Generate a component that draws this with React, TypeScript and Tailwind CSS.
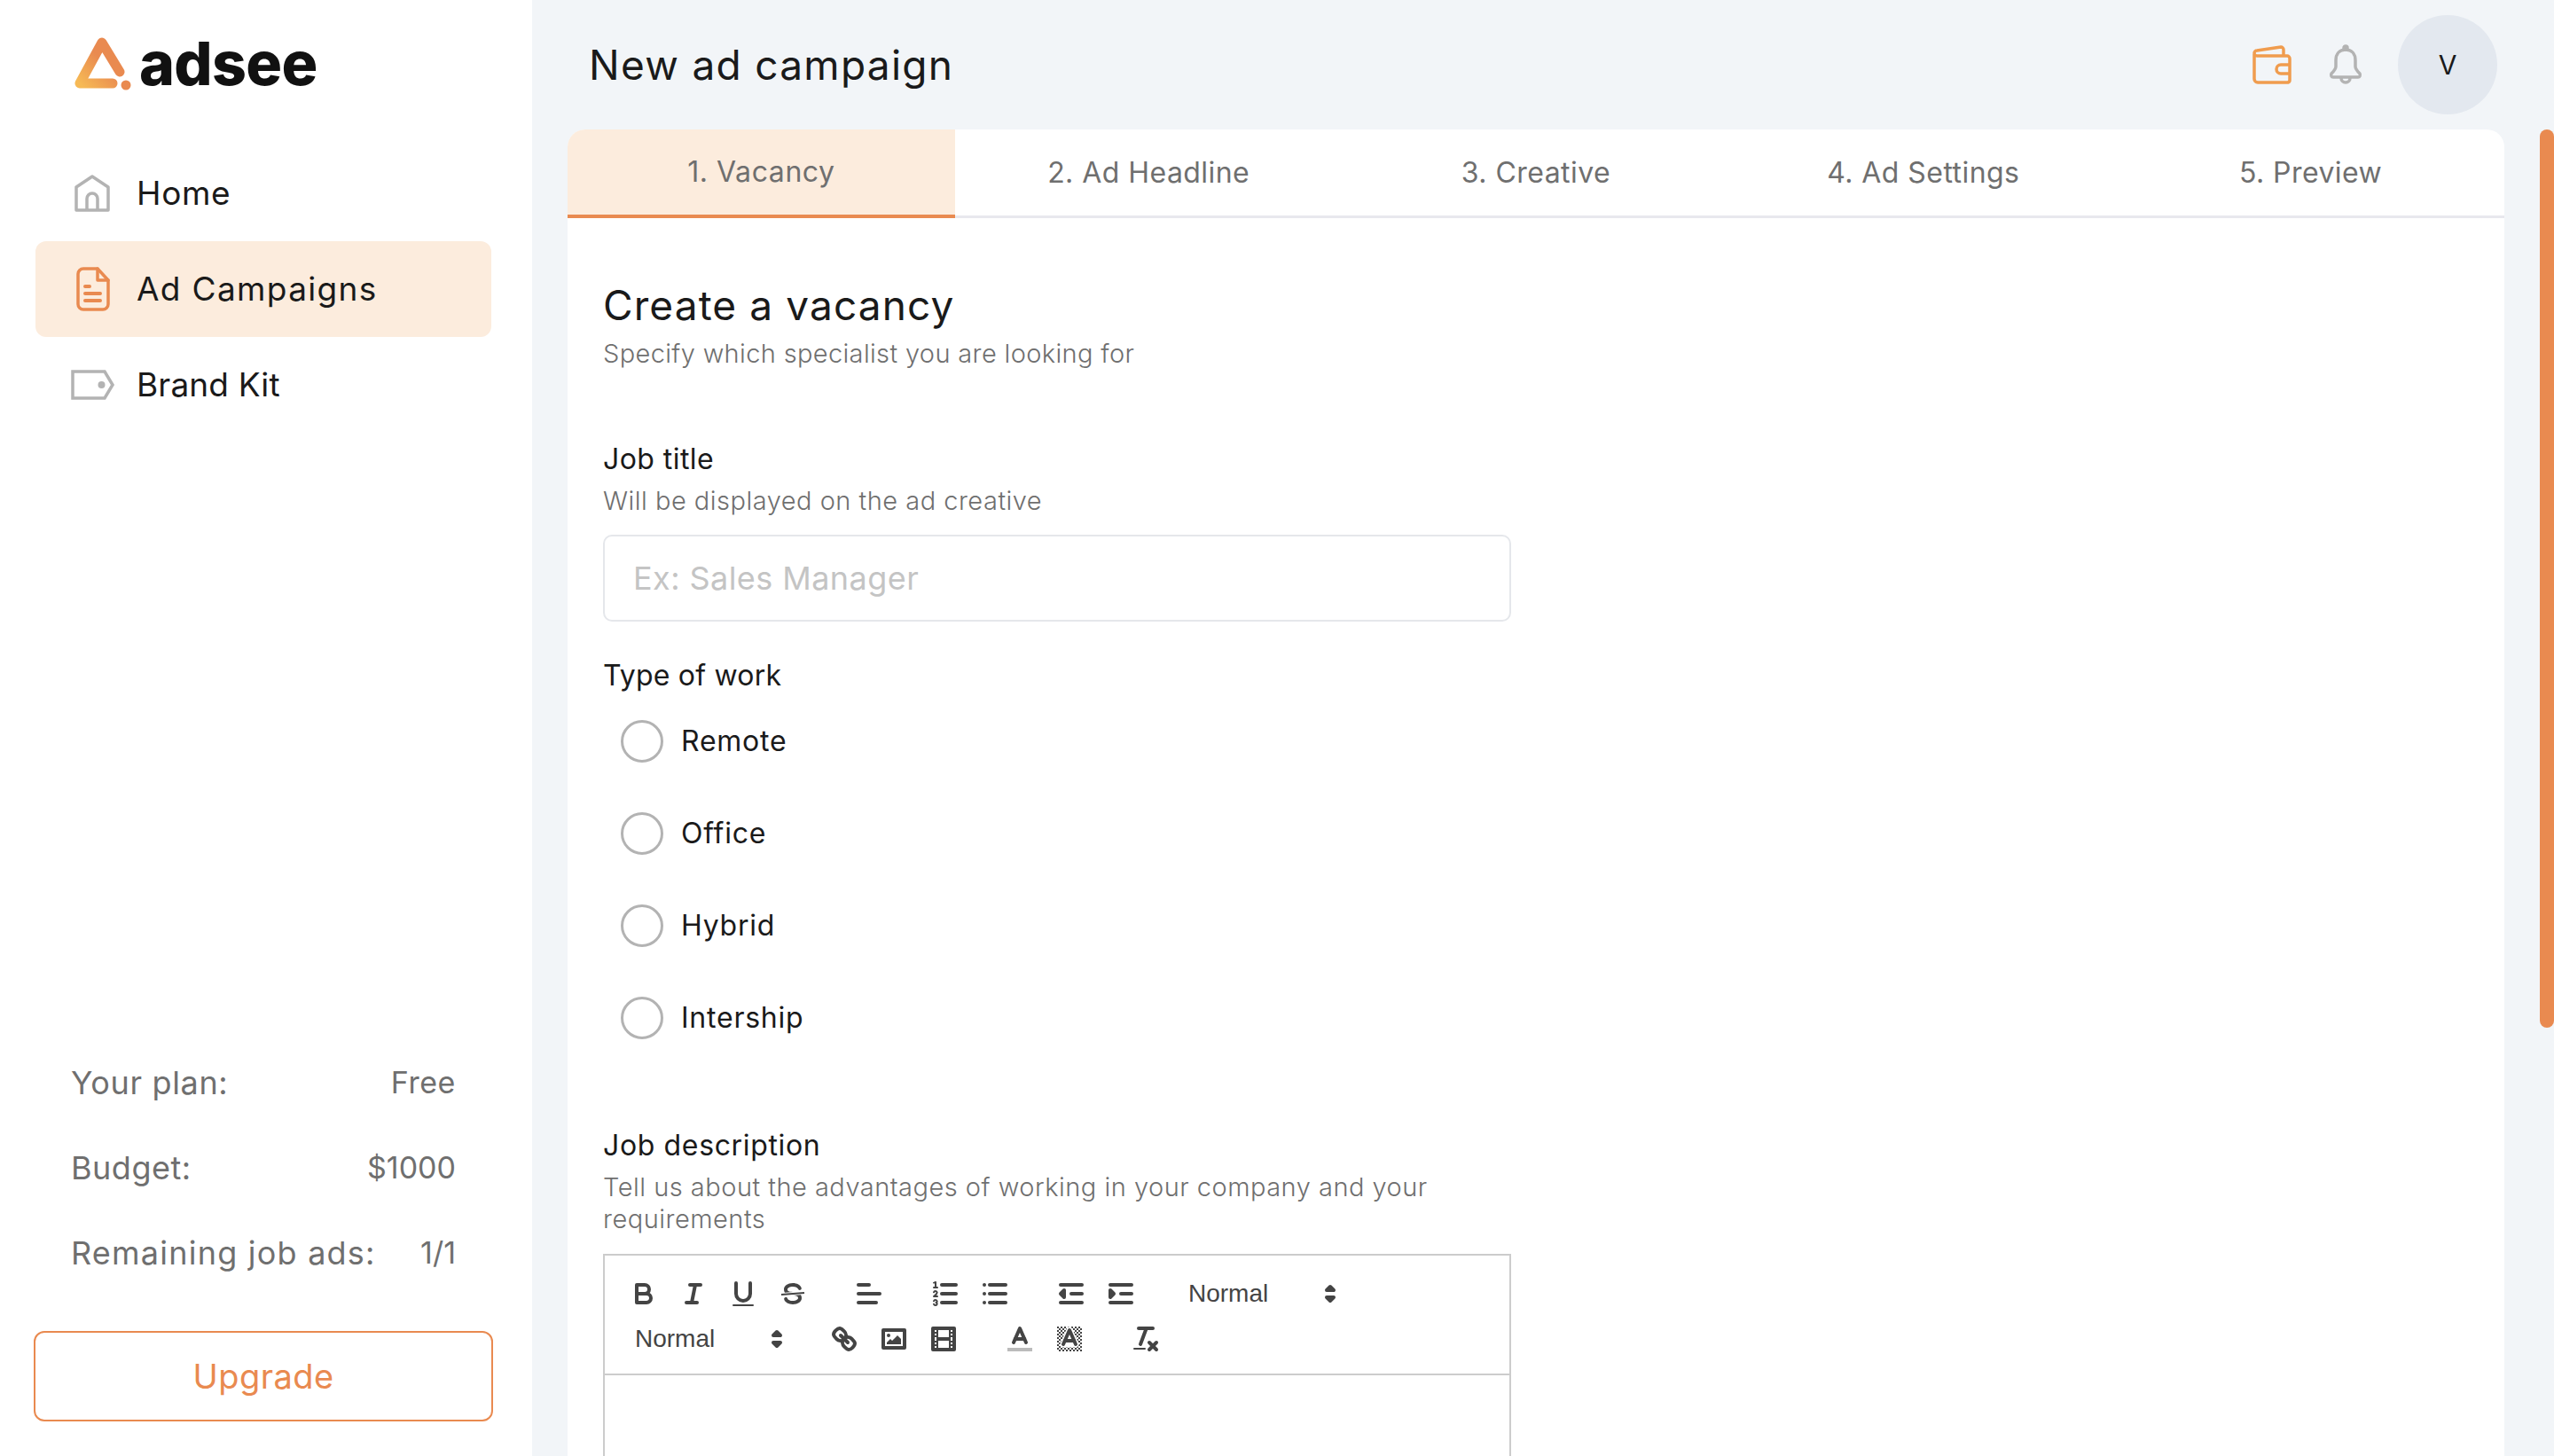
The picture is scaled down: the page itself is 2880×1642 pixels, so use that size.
import type { ReactNode } from "react";

const tabs = ["1. Vacancy", "2. Ad Headline", "3. Creative", "4. Ad Settings", "5. Preview"];
const workTypes = ["Remote", "Office", "Hybrid", "Intership"];

function HomeIcon() {
  return (
    <svg width="42" height="44" viewBox="0 0 42 44" fill="none" stroke="#b3b3b3" strokeWidth="3.5" strokeLinejoin="round">
      <path d="M2 15 20 3l18 12v26H2Z" />
      <path d="M14 41V28a6 6 0 0 1 12 0v13" />
    </svg>
  );
}

function DocIcon() {
  return (
    <svg width="38" height="50" viewBox="0 0 38 50" fill="none" stroke="#e98a50" strokeWidth="3.5" strokeLinecap="round" strokeLinejoin="round">
      <path d="M8 2h16l12 13v27a6 6 0 0 1-6 6H8a6 6 0 0 1-6-6V8a6 6 0 0 1 6-6Z" />
      <path d="M24 2v13h12" />
      <path d="M10 22h5M10 30h17M10 38h17" strokeWidth="4" />
    </svg>
  );
}

function TagIcon() {
  return (
    <svg width="50" height="34" viewBox="0 0 50 34" fill="none" stroke="#b3b3b3" strokeWidth="3.5">
      <path d="M2 2h36l9 15-9 15H2Z" />
      <circle cx="34.5" cy="17" r="4" fill="#b3b3b3" stroke="none" />
    </svg>
  );
}

function WalletIcon() {
  return (
    <svg width="46" height="46" viewBox="0 0 46 46" fill="none" stroke="#f09c4e" strokeWidth="3.5" strokeLinejoin="round">
      <path d="M3 11v28a4 4 0 0 0 4 4h34a3 3 0 0 0 2-3V16a3 3 0 0 0-3-3H6a3 3 0 0 1-3-3 3 3 0 0 1 3-3l27-4a3 3 0 0 1 3 3v7" />
      <path d="M43 23H33a5 5 0 0 0 0 10h10" />
    </svg>
  );
}

function BellIcon() {
  return (
    <svg width="38" height="46" viewBox="0 0 38 46" fill="none" stroke="#b3b3b3" strokeWidth="3.5" strokeLinejoin="round">
      <path d="M19 6c-7 0-11 5-11 12v7c0 3-2 5-5 8-1 2 0 4 2 4h28c2 0 3-2 2-4-3-3-5-5-5-8v-7c0-7-4-12-11-12Z" />
      <circle cx="19" cy="4" r="2" fill="#b3b3b3" />
      <path d="M14 38a5 5 0 0 0 10 0" />
    </svg>
  );
}

function LogoMark() {
  return (
    <svg width="68" height="60" viewBox="0 0 68 60" fill="none">
      <defs>
        <linearGradient id="logo" x1="0" y1="1" x2="0.8" y2="0.2">
          <stop offset="0" stopColor="#f6b955" />
          <stop offset="0.7" stopColor="#e98a50" />
        </linearGradient>
      </defs>
      <path d="M52 39 32 6 7 52h37" stroke="url(#logo)" strokeWidth="11" strokeLinecap="round" strokeLinejoin="round" />
      <circle cx="59" cy="54" r="5.5" fill="#e98a50" />
    </svg>
  );
}

// Quill's snow toolbar icons, on their 18x18 grid
function Ql({ children }: { children: ReactNode }) {
  return (
    <div className="w-[56px] h-[48px] flex items-center justify-center">
      <svg width="36" height="36" viewBox="0 0 18 18" fill="none" stroke="#444" strokeWidth="2" strokeLinecap="round" strokeLinejoin="round">
        {children}
      </svg>
    </div>
  );
}

function Picker() {
  return (
    <div className="w-[196px] h-[48px] flex items-center justify-between pl-[18px] text-[28px] text-[#444] font-['Liberation_Sans',sans-serif]">
      <span>Normal</span>
      <svg width="36" height="36" viewBox="0 0 18 18" fill="#444" stroke="#444" strokeWidth="2" strokeLinejoin="round">
        <polygon points="7 11 9 13 11 11 7 11" />
        <polygon points="7 7 9 5 11 7 7 7" />
      </svg>
    </div>
  );
}

function Toolbar() {
  return (
    <div className="border-b-2 border-[#ccc] pt-[19px] pb-[15px] pl-[16px] flex flex-col gap-[3px]">
      <div className="flex gap-[30px]">
        <div className="flex">
          <Ql>
            <path d="M5,4H9.5A2.5,2.5,0,0,1,12,6.5v0A2.5,2.5,0,0,1,9.5,9H5A0,0,0,0,1,5,9V4A0,0,0,0,1,5,4Z" />
            <path d="M5,9h5.5A2.5,2.5,0,0,1,13,11.5v0A2.5,2.5,0,0,1,10.5,14H5a0,0,0,0,1,0,0V9A0,0,0,0,1,5,9Z" />
          </Ql>
          <Ql>
            <line x1="7" x2="13" y1="4" y2="4" />
            <line x1="5" x2="11" y1="14" y2="14" />
            <line x1="8" x2="10" y1="14" y2="4" />
          </Ql>
          <Ql>
            <path d="M5,3V9a4.012,4.012,0,0,0,4,4H9a4.012,4.012,0,0,0,4-4V3" />
            <rect height="1" rx="0.5" ry="0.5" width="12" x="3" y="15" fill="#444" stroke="none" />
          </Ql>
          <Ql>
            <line x1="15.5" x2="2.5" y1="8.5" y2="9.5" strokeLinecap="butt" strokeWidth="1" />
            <path fill="#444" stroke="none" d="M9.007,8C6.542,7.791,6,7.519,6,6.5,6,5.792,7.283,5,9,5c1.571,0,2.765.679,2.969,1.309a1,1,0,0,0,1.9-.617C13.356,4.106,11.354,3,9,3,6.2,3,4,4.538,4,6.5a3.2,3.2,0,0,0,.5,1.843Z" />
            <path fill="#444" stroke="none" d="M8.984,10C11.457,10.208,12,10.479,12,11.5c0,.708-1.283,1.5-3,1.5-1.571,0-2.765-.679-2.969-1.309a1,1,0,1,0-1.9.617C4.644,13.894,6.646,15,9,15c2.8,0,5-1.538,5-3.5a3.2,3.2,0,0,0-.5-1.843Z" />
          </Ql>
        </div>
        <Ql>
          <line x1="3" x2="15" y1="9" y2="9" />
          <line x1="3" x2="13" y1="14" y2="14" />
          <line x1="3" x2="9" y1="4" y2="4" />
        </Ql>
        <div className="flex">
          <Ql>
            <line x1="7" x2="15" y1="4" y2="4" />
            <line x1="7" x2="15" y1="9" y2="9" />
            <line x1="7" x2="15" y1="14" y2="14" />
            <line strokeWidth="1" x1="2.5" x2="4.5" y1="5.5" y2="5.5" />
            <path fill="#444" stroke="none" d="M3.5,6A0.5,0.5,0,0,1,3,5.5V3.085l-0.276.138A0.5,0.5,0,0,1,2.053,3c-0.124-.247-0.023-0.324.224-0.447l1-.5A0.5,0.5,0,0,1,4,2.5v3A0.5,0.5,0,0,1,3.5,6Z" />
            <path strokeWidth="1" d="M4.5,10.5h-2c0-.234,1.85-1.076,1.85-2.234A0.959,0.959,0,0,0,2.5,8.156" />
            <path strokeWidth="1" d="M2.5,14.846a0.959,0.959,0,0,0,1.85-.109A0.7,0.7,0,0,0,3.75,14a0.688,0.688,0,0,0,.6-0.736,0.959,0.959,0,0,0-1.85-.109" />
          </Ql>
          <Ql>
            <line x1="6" x2="15" y1="4" y2="4" />
            <line x1="6" x2="15" y1="9" y2="9" />
            <line x1="6" x2="15" y1="14" y2="14" />
            <line x1="3" x2="3" y1="4" y2="4" />
            <line x1="3" x2="3" y1="9" y2="9" />
            <line x1="3" x2="3" y1="14" y2="14" />
          </Ql>
        </div>
        <div className="flex">
          <Ql>
            <line x1="3" x2="15" y1="14" y2="14" />
            <line x1="3" x2="15" y1="4" y2="4" />
            <line x1="9" x2="15" y1="9" y2="9" />
            <polyline fill="#444" points="5 7 5 11 3 9 5 7" />
          </Ql>
          <Ql>
            <line x1="3" x2="15" y1="14" y2="14" />
            <line x1="3" x2="15" y1="4" y2="4" />
            <line x1="9" x2="15" y1="9" y2="9" />
            <polyline fill="#444" points="3 7 3 11 5 9 3 7" />
          </Ql>
        </div>
        <Picker />
      </div>
      <div className="flex gap-[30px]">
        <Picker />
        <div className="flex">
          <Ql>
            <line x1="7" x2="11" y1="7" y2="11" />
            <path d="M8.9,4.577a3.476,3.476,0,0,1,.36,4.679A3.476,3.476,0,0,1,4.577,8.9C3.185,7.5,2.035,6.4,4.217,4.217S7.5,3.185,8.9,4.577Z" />
            <path d="M13.423,9.1a3.476,3.476,0,0,0-4.679-.36,3.476,3.476,0,0,0,.36,4.679c1.392,1.392,2.5,2.542,4.679.36S14.815,10.5,13.423,9.1Z" />
          </Ql>
          <Ql>
            <rect height="10" width="12" x="3" y="4" />
            <circle cx="6" cy="7" r="1" fill="#444" stroke="none" />
            <polyline fill="#444" stroke="none" points="5 12 5 11 7 9 8 10 11 7 13 9 13 12 5 12" />
          </Ql>
          <Ql>
            <rect height="12" width="12" x="3" y="3" />
            <rect fill="#444" stroke="none" height="12" width="1" x="5" y="3" />
            <rect fill="#444" stroke="none" height="12" width="1" x="12" y="3" />
            <rect fill="#444" stroke="none" height="2" width="8" x="5" y="8" />
            <rect fill="#444" stroke="none" height="1" width="3" x="3" y="5" />
            <rect fill="#444" stroke="none" height="1" width="3" x="3" y="7" />
            <rect fill="#444" stroke="none" height="1" width="3" x="3" y="10" />
            <rect fill="#444" stroke="none" height="1" width="3" x="3" y="12" />
            <rect fill="#444" stroke="none" height="1" width="3" x="12" y="5" />
            <rect fill="#444" stroke="none" height="1" width="3" x="12" y="7" />
            <rect fill="#444" stroke="none" height="1" width="3" x="12" y="10" />
            <rect fill="#444" stroke="none" height="1" width="3" x="12" y="12" />
          </Ql>
        </div>
        <div className="flex">
          <Ql>
            <line stroke="#bbb" strokeLinecap="square" x1="3" x2="15" y1="15" y2="15" />
            <polyline points="5.5 11 9 3 12.5 11" />
            <line x1="11.63" x2="6.38" y1="9" y2="9" />
          </Ql>
          <Ql>
            <defs>
              <pattern id="checker" width="2" height="2" patternUnits="userSpaceOnUse">
                <rect width="1" height="1" fill="#444" stroke="none" />
                <rect x="1" y="1" width="1" height="1" fill="#444" stroke="none" />
              </pattern>
            </defs>
            <rect x="2" y="2" width="14" height="14" fill="url(#checker)" stroke="none" />
            <polygon points="5.5 12 9 4 12.5 12" fill="#fff" stroke="#fff" strokeWidth="3.5" />
            <polyline points="5.5 12 9 4 12.5 12" />
            <line x1="11.63" x2="6.38" y1="10" y2="10" />
          </Ql>
        </div>
        <Ql>
          <line x1="5" x2="13" y1="3" y2="3" />
          <line x1="6" x2="9.35" y1="12" y2="3" />
          <line x1="11" x2="15" y1="11" y2="15" />
          <line x1="15" x2="11" y1="11" y2="15" />
          <rect fill="#444" stroke="none" height="1" rx="0.5" ry="0.5" width="7" x="2" y="14" />
        </Ql>
      </div>
    </div>
  );
}

function Sidebar() {
  return (
    <aside className="w-[600px] shrink-0 bg-white flex flex-col h-full">
      <div className="h-[146px] pl-[83px] flex items-center gap-[6px] pb-[2px]">
        <LogoMark />
        <span className="text-[68px] leading-none font-extrabold text-[#111] -mt-[2px] tracking-[-0.01em]">adsee</span>
      </div>
      <nav className="mt-[18px] px-[40px] flex flex-col text-[37px] text-[#1a1a1a]">
        <div className="h-[108px] flex items-center">
          <div className="w-[114px] pl-[44px]"><HomeIcon /></div>
          <span className="tracking-[0.018em]">Home</span>
        </div>
        <div className="h-[108px] flex items-center bg-[#fcecdd] rounded-[12px] w-[514px]">
          <div className="w-[114px] pl-[46px]"><DocIcon /></div>
          <span className="tracking-[0.036em]">Ad Campaigns</span>
        </div>
        <div className="h-[108px] flex items-center">
          <div className="w-[114px] pl-[40px]"><TagIcon /></div>
          <span className="tracking-[0.004em]">Brand Kit</span>
        </div>
      </nav>
      <div className="mt-auto pl-[80px] pr-[86px] flex flex-col gap-[48px] leading-[48px] text-[#6f6f6f]">
        <div className="flex justify-between items-center">
          <span className="text-[36px] tracking-[0.018em]">Your plan:</span>
          <span className="text-[34px] tracking-[0.016em]">Free</span>
        </div>
        <div className="flex justify-between items-center">
          <span className="text-[36px] tracking-[0.014em]">Budget:</span>
          <span className="text-[34px]">$1000</span>
        </div>
        <div className="flex justify-between items-center">
          <span className="text-[36px] tracking-[0.034em]">Remaining job ads:</span>
          <span className="text-[34px]">1/1</span>
        </div>
      </div>
      <button className="mt-[64px] mb-[39px] ml-[38px] w-[518px] h-[102px] rounded-[12px] border-2 border-[#e98a50] text-[38px] text-[#e98a50] bg-white tracking-[0.012em]">
        Upgrade
      </button>
    </aside>
  );
}

export default function App() {
  return (
    <div className="h-[1642px] w-[2880px] overflow-hidden flex bg-[#f2f5f8] font-[Inter,sans-serif]">
      <Sidebar />
      <main className="flex-1 min-w-0 flex flex-col">
        <header className="h-[146px] shrink-0 pl-[64px] pr-[48px] flex items-center">
          <h1 className="text-[46px] leading-none text-[#1a1a1a] tracking-[0.028em]">New ad campaign</h1>
          <div className="ml-auto flex items-center">
            <WalletIcon />
            <div className="ml-[41px]"><BellIcon /></div>
            <div className="ml-[40px] w-[112px] h-[112px] rounded-full bg-[#e3e8ef] flex items-center justify-center text-[30px] text-[#1a1a1a]">V</div>
          </div>
        </header>
        <section className="mx-[40px] flex-1 bg-white rounded-t-[20px] overflow-hidden">
          <div className="flex h-[100px] border-b-[3px] border-[#e8e8ee]">
            {tabs.map((tab, i) => (
              <div
                key={tab}
                className={
                  i === 0
                    ? "flex-1 -mb-[3px] bg-[#fcecdd] border-b-[4px] border-[#e98a50] flex items-center justify-center text-[32px] text-[#6f6f6f] tracking-[0.018em]"
                    : "flex-1 flex items-center justify-center text-[32px] text-[#6f6f6f] tracking-[0.014em]"
                }
              >
                {tab}
              </div>
            ))}
          </div>
          <div className="pl-[40px] w-[1064px]">
            <h2 className="mt-[68px] text-[46px] leading-[60px] text-[#1a1a1a] tracking-[0.024em]">Create a vacancy</h2>
            <p className="mt-[3px] text-[29px] leading-[44px] font-light text-[#6f6f6f] tracking-[0.012em]">Specify which specialist you are looking for</p>
            <label className="block mt-[75px] text-[32px] leading-[44px] text-[#1a1a1a] tracking-[0.014em]">Job title</label>
            <p className="mt-[5px] text-[29px] leading-[40px] font-light text-[#6f6f6f] tracking-[0.017em]">Will be displayed on the ad creative</p>
            <input
              placeholder="Ex: Sales Manager"
              className="block mt-[18px] w-full h-[98px] px-[32px] rounded-[10px] border-2 border-[#e5e7eb] text-[36px] tracking-[0.012em] placeholder:text-[#c4c4c4]"
            />
            <label className="block mt-[39px] text-[32px] leading-[44px] text-[#1a1a1a] tracking-[0.006em]">Type of work</label>
            {workTypes.map((t) => (
              <div key={t} className="h-[104px] pl-[20px] flex items-center gap-[20px] text-[32px] text-[#1a1a1a] tracking-[0.024em]">
                <div className="w-[48px] h-[48px] rounded-full border-[3px] border-[#b3b3b3]" />
                <span>{t}</span>
              </div>
            ))}
            <label className="block mt-[70px] text-[32px] leading-[44px] text-[#1a1a1a] tracking-[0.02em]">Job description</label>
            <p className="mt-[7px] text-[29px] leading-[36px] font-light text-[#6f6f6f] tracking-[0.017em]">
              Tell us about the advantages of working in your company and your
              <br />
              requirements
            </p>
            <div className="mt-[21px] w-[1024px] h-[400px] border-2 border-[#ccc]">
              <Toolbar />
            </div>
          </div>
        </section>
      </main>
      <div className="w-[16px] shrink-0 pt-[146px]">
        <div className="h-[1013px] bg-[#e98a50] rounded-t-[8px] rounded-b-[8px]" />
      </div>
    </div>
  );
}
